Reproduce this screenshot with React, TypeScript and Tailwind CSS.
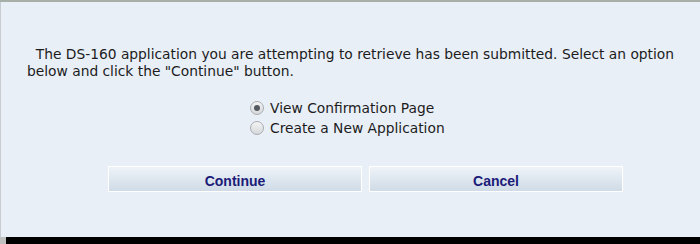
import React, { useState } from 'react';

const options = ['View Confirmation Page', 'Create a New Application'];

const Radio: React.FC<{ checked: boolean; label: string; onClick: () => void }> = ({ checked, label, onClick }) => (
  <label className="flex items-center h-[20px] cursor-pointer" onClick={onClick}>
    <span className="w-[14px] h-[14px] rounded-full border border-[#a9adb2] bg-gradient-to-b from-[#f4f4f4] to-[#d6d8db] flex items-center justify-center">
      {checked && <span className="w-[6px] h-[6px] rounded-full bg-[#555a60]" />}
    </span>
    <span className="ml-[6px]">{label}</span>
  </label>
);

const App: React.FC = () => {
  const [choice, setChoice] = useState(0);

  return (
    <div className="w-[700px] h-[244px] flex flex-col bg-[#e9eff7] font-['DejaVu_Sans',Verdana,sans-serif] text-[13.8px] text-[#1c1c1c]">
      <div className="h-[2px] bg-[#a8aea8]" />
      <div className="flex-1 border-l border-[#c9ccd0] pl-[26px] pt-[44px] leading-[17px]">
        <p className="w-[652px]">
          &nbsp;&nbsp;The DS-160 application you are attempting to retrieve has been submitted. Select an option
          below and click the "Continue" button.
        </p>

        <div className="mt-[18px] ml-[223px] flex flex-col">
          {options.map((o, i) => (
            <Radio key={o} label={o} checked={choice === i} onClick={() => setChoice(i)} />
          ))}
        </div>

        <div className="mt-[28px] ml-[81px] flex gap-[7px]">
          {['Continue', 'Cancel'].map((b) => (
            <button
              key={b}
              className="w-[254px] h-[26px] pt-[5px] border border-white bg-gradient-to-b from-[#eef3f8] to-[#cfdbe6] font-['Liberation_Sans',Arial,sans-serif] font-bold text-[14px] text-[#1b1b78]"
            >
              {b}
            </button>
          ))}
        </div>
      </div>
      <div className="h-[7px] flex">
        <div className="w-[6px] bg-[#bfc0c0]" />
        <div className="flex-1 bg-black" />
      </div>
    </div>
  );
};

export default App;
